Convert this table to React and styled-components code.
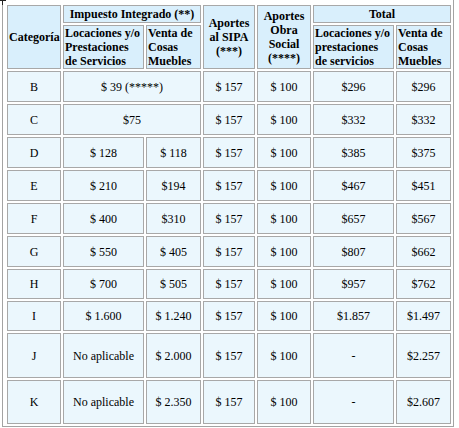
import React from 'react';
import styled, { createGlobalStyle } from 'styled-components';

const serif = '"Liberation Serif", "Times New Roman", serif';

const GlobalStyle = createGlobalStyle`
  html, body {
    margin: 0;
    padding: 0;
    background: #ffffff;
  }
  body {
    font-family: ${serif};
    color: #000000;
  }
`;

const Frame = styled.div`
  position: relative;
  width: 448px;
  margin-left: 2px;
  padding: 3px 0 0 2px;
  border: 1px solid #a3a3a3;
  border-top: none;

  &::before {
    content: '';
    position: absolute;
    left: -3px;
    top: 0;
    width: 6px;
    height: 1px;
    background: #222;
  }

  &::after {
    content: '';
    position: absolute;
    left: -1px;
    top: 0;
    width: 1px;
    height: 5px;
    background: #222;
  }
`;

const Table = styled.table`
  width: 448px;
  table-layout: fixed;
  border-collapse: separate;
  border-spacing: 2px;
  font-family: ${serif};
  font-size: 12px;
  color: #000;
`;

const Row = styled.tr`
  height: ${(p) => p.$h}px;
`;

const HeadCell = styled.th`
  box-sizing: border-box;
  background: #d9effc;
  border: 1px solid #a8a8a8;
  padding: 0 1px;
  font-family: ${serif};
  font-weight: bold;
  font-size: 12px;
  line-height: 14px;
  text-align: ${(p) => p.$align || 'center'};
  vertical-align: middle;
`;

const BodyCell = styled.td`
  box-sizing: border-box;
  background: #ebf7fd;
  border: 1px solid #a8a8a8;
  padding: 0;
  font-family: ${serif};
  font-size: 12px;
  line-height: 14px;
  text-align: center;
  vertical-align: middle;
`;

const widths = [54, 81, 55, 52, 54, 81, 55];

const rows = [
  { cat: 'B', merged: '$ 39 (*****)', sipa: '$ 157', obra: '$ 100', tl: '$296', tv: '$296', h: 31 },
  { cat: 'C', merged: '$75', sipa: '$ 157', obra: '$ 100', tl: '$332', tv: '$332', h: 31 },
  { cat: 'D', loc: '$ 128', venta: '$ 118', sipa: '$ 157', obra: '$ 100', tl: '$385', tv: '$375', h: 31 },
  { cat: 'E', loc: '$ 210', venta: '$194', sipa: '$ 157', obra: '$ 100', tl: '$467', tv: '$451', h: 31 },
  { cat: 'F', loc: '$ 400', venta: '$310', sipa: '$ 157', obra: '$ 100', tl: '$657', tv: '$567', h: 31 },
  { cat: 'G', loc: '$ 550', venta: '$ 405', sipa: '$ 157', obra: '$ 100', tl: '$807', tv: '$662', h: 31 },
  { cat: 'H', loc: '$ 700', venta: '$ 505', sipa: '$ 157', obra: '$ 100', tl: '$957', tv: '$762', h: 30 },
  { cat: 'I', loc: '$ 1.600', venta: '$ 1.240', sipa: '$ 157', obra: '$ 100', tl: '$1.857', tv: '$1.497', h: 30 },
  { cat: 'J', loc: 'No aplicable', venta: '$ 2.000', sipa: '$ 157', obra: '$ 100', tl: '-', tv: '$2.257', h: 45 },
  { cat: 'K', loc: 'No aplicable', venta: '$ 2.350', sipa: '$ 157', obra: '$ 100', tl: '-', tv: '$2.607', h: 44 },
];

const App = () => {
  return (
    <>
      <GlobalStyle />
      <Frame>
        <Table>
          <colgroup>
            {widths.map((w, i) => (
              <col key={i} style={{ width: w }} />
            ))}
          </colgroup>
          <thead>
            <Row $h={18}>
              <HeadCell rowSpan={2}>Categoría</HeadCell>
              <HeadCell colSpan={2}>Impuesto Integrado (**)</HeadCell>
              <HeadCell rowSpan={2}>
                Aportes<br />al SIPA<br />(***)
              </HeadCell>
              <HeadCell rowSpan={2}>
                Aportes<br />Obra<br />Social<br />(****)
              </HeadCell>
              <HeadCell colSpan={2}>Total</HeadCell>
            </Row>
            <Row $h={44}>
              <HeadCell $align="left">
                Locaciones y/o<br />Prestaciones<br />de Servicios
              </HeadCell>
              <HeadCell $align="left">
                Venta de<br />Cosas<br />Muebles
              </HeadCell>
              <HeadCell $align="left">
                Locaciones y/o<br />prestaciones<br />de servicios
              </HeadCell>
              <HeadCell $align="left">
                Venta de<br />Cosas<br />Muebles
              </HeadCell>
            </Row>
          </thead>
          <tbody>
            {rows.map((r) => (
              <Row key={r.cat} $h={r.h}>
                <BodyCell>{r.cat}</BodyCell>
                {r.merged ? (
                  <BodyCell colSpan={2}>{r.merged}</BodyCell>
                ) : (
                  <>
                    <BodyCell>{r.loc}</BodyCell>
                    <BodyCell>{r.venta}</BodyCell>
                  </>
                )}
                <BodyCell>{r.sipa}</BodyCell>
                <BodyCell>{r.obra}</BodyCell>
                <BodyCell>{r.tl}</BodyCell>
                <BodyCell>{r.tv}</BodyCell>
              </Row>
            ))}
          </tbody>
        </Table>
      </Frame>
    </>
  );
};

export default App;
